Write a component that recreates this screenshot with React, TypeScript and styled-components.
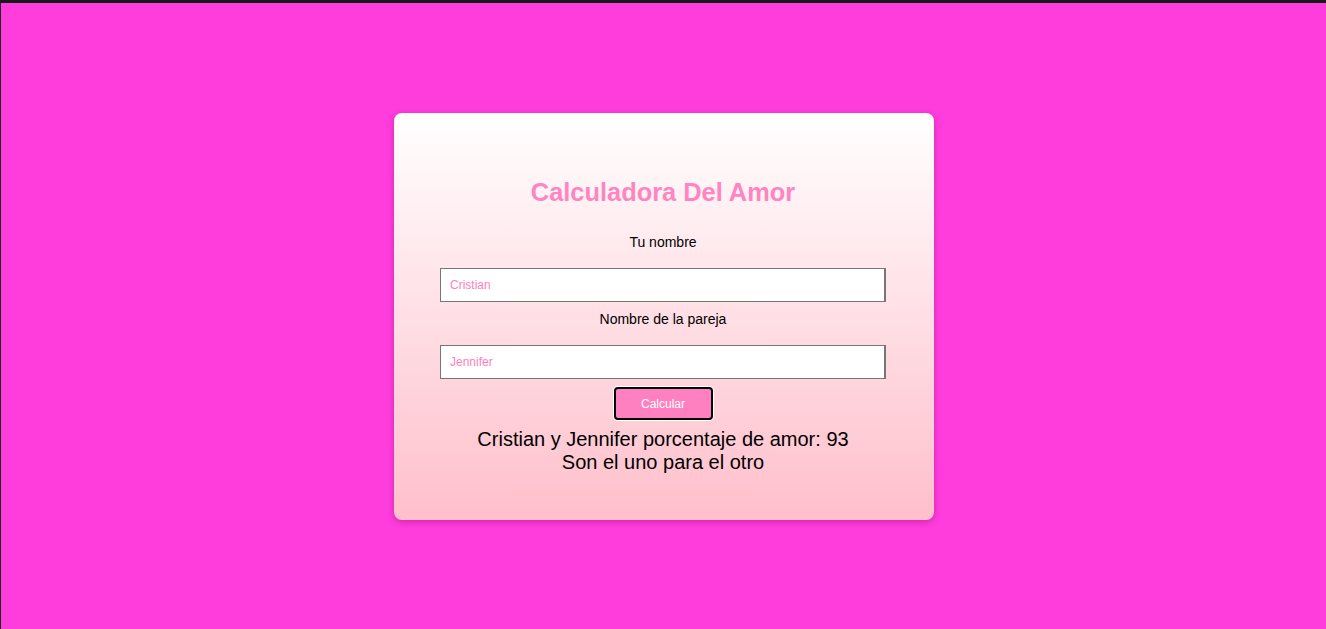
import React from "react";
import styled, { createGlobalStyle } from "styled-components";

const Global = createGlobalStyle`
  html, body { margin: 0; padding: 0; }
  body {
    background: #ff3cdc;
    font-family: "Liberation Sans", Arial, sans-serif;
    border-top: 3px solid #181818;
    border-left: 1px solid #1f1f1f;
    min-height: 100vh;
    box-sizing: border-box;
  }
`;

const Page = styled.main`
  display: flex;
  justify-content: center;
  padding-top: 110px;
  padding-left: 1px;
`;

const Card = styled.section`
  width: 540px;
  box-sizing: border-box;
  padding: 65px 48px 46px 46px;
  border-radius: 8px;
  background: linear-gradient(to bottom, #ffffff 0%, #ffbfcb 100%);
  box-shadow: 0 2px 6px rgba(120, 0, 90, 0.35);
  display: flex;
  flex-direction: column;
  align-items: center;
`;

const Title = styled.h1`
  margin: 0 0 28px;
  font-size: 25.4px;
  line-height: 28px;
  font-weight: bold;
  color: #ff85c0;
`;

const Label = styled.label<{ $gap: number }>`
  font-size: 14px;
  line-height: 16px;
  color: #000;
  margin-bottom: 18px;
  margin-top: ${(p) => p.$gap}px;
`;

const Input = styled.input`
  width: 446px;
  height: 34px;
  box-sizing: border-box;
  border: 1px solid #767676;
  border-right-width: 2px;
  background: #fff;
  padding: 0 9px;
  font-family: "Liberation Sans", Arial, sans-serif;
  font-size: 12px;
  outline: none;
  &::placeholder { color: #ff80c0; }
`;

const Button = styled.button`
  margin-top: 8px;
  width: 99px;
  height: 33px;
  background: #ff80c0;
  color: #fff;
  border: 2px solid #000;
  border-radius: 4px;
  box-shadow: 0 0 0 1px #fff;
  font-family: "Liberation Sans", Arial, sans-serif;
  font-size: 12px;
  cursor: pointer;
`;

const Result = styled.p`
  margin: 8px 0 0;
  font-size: 20px;
  line-height: 23px;
  color: #000;
  text-align: center;
`;

export default function App() {
  return (
    <>
      <Global />
      <Page>
        <Card>
          <Title>Calculadora Del Amor</Title>
          <Label $gap={0}>Tu nombre</Label>
          <Input placeholder="Cristian" />
          <Label $gap={9}>Nombre de la pareja</Label>
          <Input placeholder="Jennifer" />
          <Button>Calcular</Button>
          <Result>
            Cristian y Jennifer porcentaje de amor: 93
            <br />
            Son el uno para el otro
          </Result>
        </Card>
      </Page>
    </>
  );
}
